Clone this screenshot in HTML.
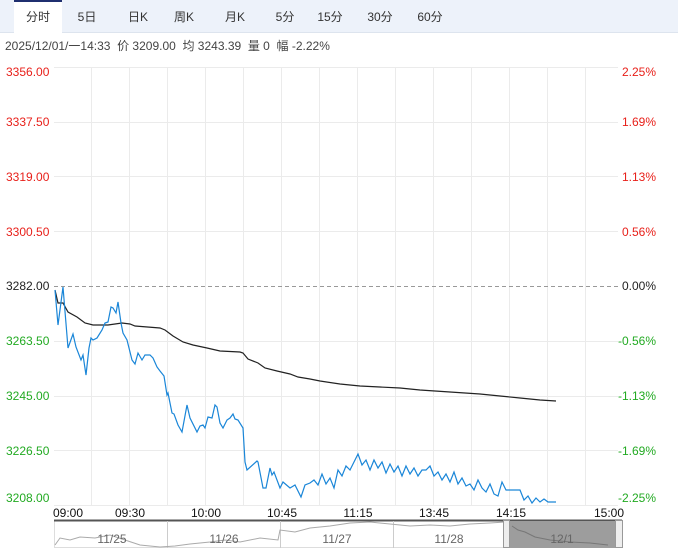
<!DOCTYPE html>
<html><head><meta charset="utf-8"><style>
*{margin:0;padding:0;box-sizing:border-box}
body{width:678px;height:550px;background:#fff;font-family:"Liberation Sans","Noto Sans CJK SC",sans-serif;overflow:hidden;position:relative}
.bar{position:absolute;left:0;top:0;width:678px;height:33px;background:#edf2fa;border-bottom:1px solid #dde4ee}
.tab{position:absolute;top:0;height:33px;line-height:35px;font-size:12px;color:#333;text-align:center}
.act{background:#fff;border-top:2px solid #1f2f6f;line-height:31px;height:34px}
.info{position:absolute;left:5px;top:37px;font-size:12px;color:#444;white-space:pre}
svg{position:absolute;left:0;top:0}
</style></head><body>
<div class="bar"></div>
<div class="tab act" style="left:14px;width:48px">分时</div>
<div class="tab" style="left:67px;width:40px">5日</div>
<div class="tab" style="left:118px;width:40px">日K</div>
<div class="tab" style="left:164px;width:40px">周K</div>
<div class="tab" style="left:215px;width:40px">月K</div>
<div class="tab" style="left:265px;width:40px">5分</div>
<div class="tab" style="left:310px;width:40px">15分</div>
<div class="tab" style="left:360px;width:40px">30分</div>
<div class="tab" style="left:410px;width:40px">60分</div>
<div class="info">2025/12/01/一14:33  价 3209.00  均 3243.39  量 0  幅 -2.22%</div>
<svg width="678" height="550" font-family="Liberation Sans,sans-serif" font-size="12">
<g stroke="#ebebeb" stroke-width="1">
<path d="M54 67.5H618M54 122.5H618M54 176.5H618M54 231.5H618M54 341.5H618M54 396.5H618M54 450.5H618M54 505.5H618"/>
<path d="M91.5 67V505M129.5 67V505M167.5 67V505M205.5 67V505M243.5 67V505M281.5 67V505M319.5 67V505M357.5 67V505M395.5 67V505M433.5 67V505M471.5 67V505M509.5 67V505M547.5 67V505M585.5 67V505"/>
</g>
<path d="M54 286.5H618" stroke="#999" stroke-dasharray="4,3"/>
<g text-anchor="start">
<text x="6" y="76" fill="#e8201a">3356.00</text>
<text x="6" y="126" fill="#e8201a">3337.50</text>
<text x="6" y="181" fill="#e8201a">3319.00</text>
<text x="6" y="236" fill="#e8201a">3300.50</text>
<text x="6" y="290" fill="#222">3282.00</text>
<text x="6" y="345" fill="#22aa22">3263.50</text>
<text x="6" y="400" fill="#22aa22">3245.00</text>
<text x="6" y="455" fill="#22aa22">3226.50</text>
<text x="6" y="502" fill="#22aa22">3208.00</text>
</g>
<g text-anchor="end">
<text x="656" y="76" fill="#e8201a">2.25%</text>
<text x="656" y="126" fill="#e8201a">1.69%</text>
<text x="656" y="181" fill="#e8201a">1.13%</text>
<text x="656" y="236" fill="#e8201a">0.56%</text>
<text x="656" y="290" fill="#222">0.00%</text>
<text x="656" y="345" fill="#22aa22">-0.56%</text>
<text x="656" y="400" fill="#22aa22">-1.13%</text>
<text x="656" y="455" fill="#22aa22">-1.69%</text>
<text x="656" y="502" fill="#22aa22">-2.25%</text>
</g>
<polyline fill="none" stroke="#222" stroke-width="1.2" points="55,290 58,303 63,303 68,312 77,317 85,323 93,325 108,325 122,323 130,324 135,326 160,328 165,330 173,336 183,342 193,345 207,348 220,351 240,352 243,353 248,359 258,363 265,368 277,371 290,374 298,377 310,379 320,381 340,384 360,386 380,387 400,388 420,390 450,392 480,394 500,396 520,398 540,400 556,401"/>
<polyline fill="none" stroke="#1a86d8" stroke-width="1.2" points="55,290 58,325 63,287 68,348 73,334 76,347 81,360 83,355 86,375 89,348 91,338 93,340 97,338 102,330 105,323 108,322 111,307 113,308 116,313 118,302 121,323 123,333 127,340 132,360 135,364 138,353 142,360 145,355 150,355 153,358 157,367 160,371 164,376 167,395 168,393 172,413 174,414 178,425 182,432 187,405 190,418 197,432 200,426 203,425 205,428 208,417 212,418 215,405 217,407 220,423 223,428 227,420 230,418 233,414 235,419 238,420 243,428 245,462 247,470 257,461 258,462 263,488 266,488 270,468 272,475 274,472 280,488 283,482 290,488 295,485 301,497 305,485 310,483 314,480 318,485 322,474 326,484 330,478 334,488 338,470 342,476 346,466 350,470 354,462 358,454 362,465 366,460 370,470 374,460 378,468 382,462 386,473 390,464 394,472 398,466 402,476 406,466 410,474 414,468 418,476 422,470 426,470 430,466 434,476 438,472 442,480 446,474 450,482 454,472 458,484 462,478 466,486 470,484 474,490 478,480 482,488 486,492 490,484 494,494 498,496 502,482 506,490 520,490 524,500 528,496 532,503 536,498 540,502 544,499 548,502 556,502"/>
<g fill="#111" text-anchor="middle">
<text x="68" y="517">09:00</text><text x="130" y="517">09:30</text><text x="206" y="517">10:00</text>
<text x="282" y="517">10:45</text><text x="358" y="517">11:15</text><text x="434" y="517">13:45</text>
<text x="511" y="517">14:15</text><text x="609" y="517">15:00</text>
</g>
<rect x="54.5" y="520.5" width="568" height="27" fill="#fff" stroke="#ddd"/>
<path d="M54 520.5H622" stroke="#555" stroke-width="2"/>
<path d="M167.5 521V548M280.5 521V548M393.5 521V548" stroke="#ccc"/>
<polyline fill="none" stroke="#aaa" points="55,545 60,538 70,540 80,537 95,538 110,535 125,540 140,545 160,547 175,546 190,544 210,542 225,540 240,542 260,538 278,540 280,530 295,532 310,528 330,526 350,523 370,522 390,524 410,526 430,525 450,526 470,524 490,523 505,522"/>
<rect x="510" y="521" width="105" height="27" fill="#9d9d9d"/>
<polyline fill="none" stroke="#777" points="512,526 518,530 525,532 535,537 550,540 570,542 590,543 608,545"/>
<rect x="503.5" y="520.5" width="6" height="27" fill="#eee" stroke="#999"/>
<rect x="615.5" y="520.5" width="7" height="27" fill="#eee" stroke="#999"/>
<g fill="#666" text-anchor="middle">
<text x="112" y="543">11/25</text><text x="224" y="543">11/26</text><text x="337" y="543">11/27</text>
<text x="449" y="543">11/28</text><text x="562" y="543">12/1</text>
</g>
</svg>
</body></html>
